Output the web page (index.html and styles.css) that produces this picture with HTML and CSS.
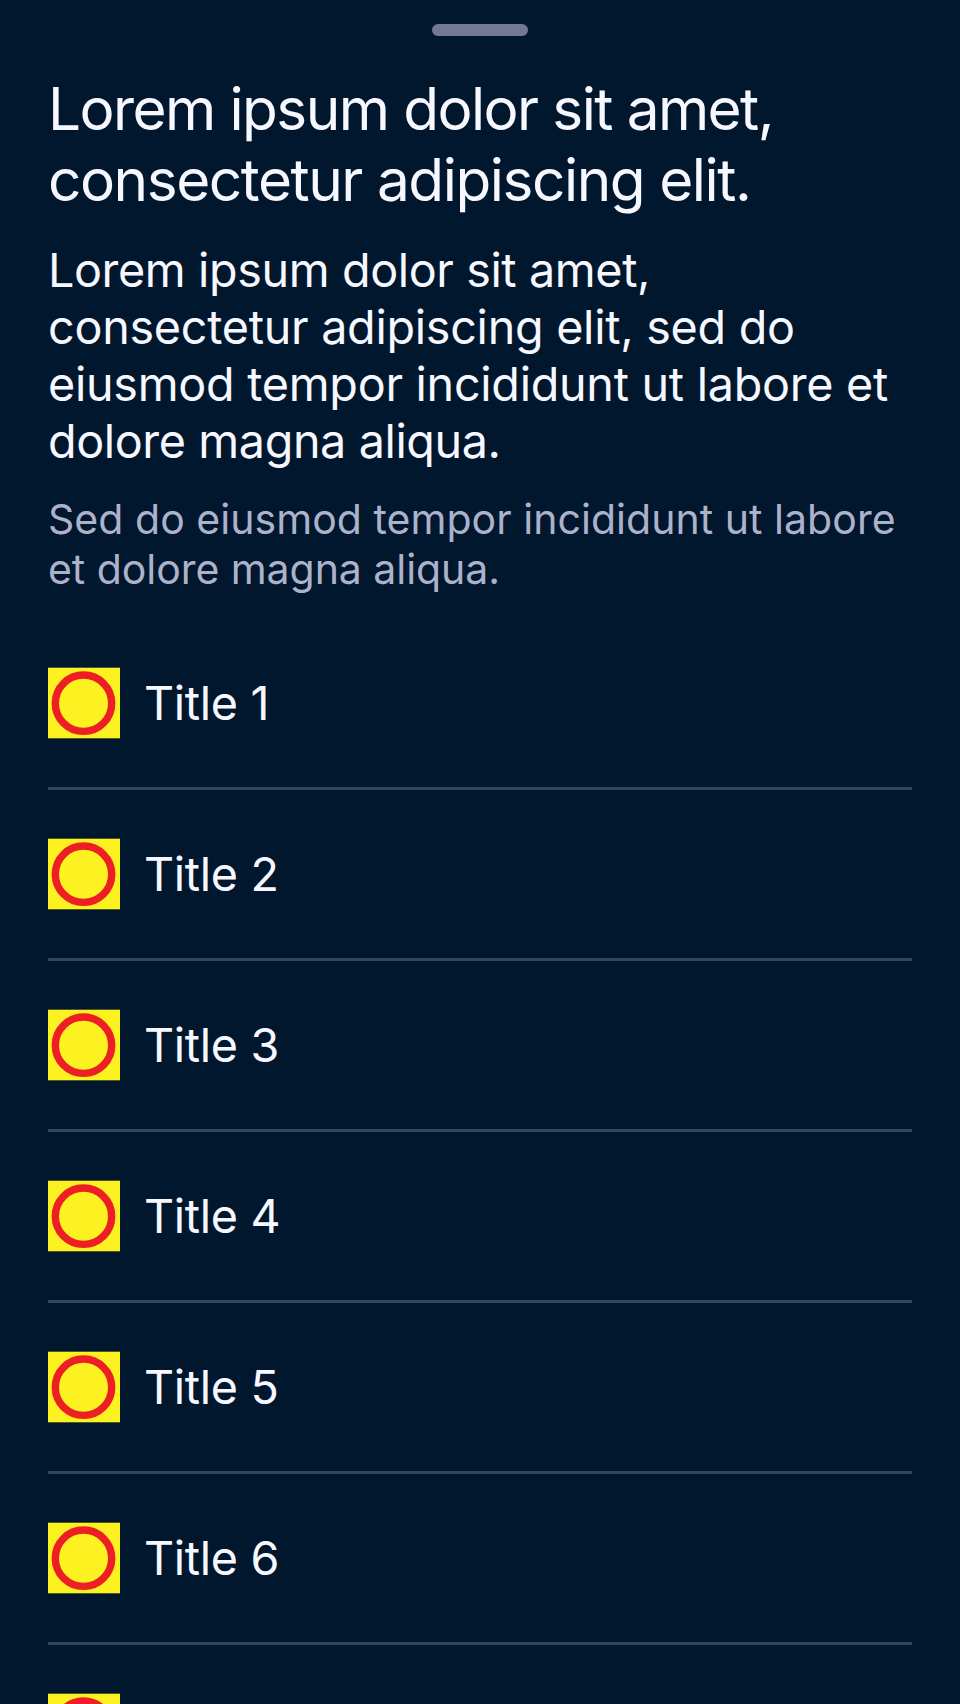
FILE: index.html
```
<!DOCTYPE html>
<html lang="en">
<head>
<meta charset="utf-8">
<title>Sheet</title>
<link rel="stylesheet" href="styles.css">
</head>
<body>
<main class="sheet">
  <div class="grabber"></div>
  <header class="intro">
    <h1 class="heading">Lorem ipsum dolor sit amet,<br><span class="heading-end">consectetur adipiscing elit.</span></h1>
    <p class="body-text"><span class="snug">Lorem ipsum dolor sit amet,</span><br>consectetur adipiscing elit, sed do<br>eiusmod tempor incididunt ut labore et<br><span class="snug">dolore magna aliqua.</span></p>
    <p class="caption">Sed do eiusmod tempor incididunt ut labore<br><span class="caption-end">et dolore magna aliqua.</span></p>
  </header>
  <ul class="list">
    <li class="row"><svg class="icon" viewBox="0 0 72 72"><rect class="tile" y="0.7" width="72" height="70.6"/><circle class="ring" cx="35.5" cy="36.2" r="28.2"/></svg><span class="title">Title 1</span></li>
    <li class="row"><svg class="icon" viewBox="0 0 72 72"><rect class="tile" y="0.7" width="72" height="70.6"/><circle class="ring" cx="35.5" cy="36.2" r="28.2"/></svg><span class="title">Title 2</span></li>
    <li class="row"><svg class="icon" viewBox="0 0 72 72"><rect class="tile" y="0.7" width="72" height="70.6"/><circle class="ring" cx="35.5" cy="36.2" r="28.2"/></svg><span class="title">Title 3</span></li>
    <li class="row"><svg class="icon" viewBox="0 0 72 72"><rect class="tile" y="0.7" width="72" height="70.6"/><circle class="ring" cx="35.5" cy="36.2" r="28.2"/></svg><span class="title">Title 4</span></li>
    <li class="row"><svg class="icon" viewBox="0 0 72 72"><rect class="tile" y="0.7" width="72" height="70.6"/><circle class="ring" cx="35.5" cy="36.2" r="28.2"/></svg><span class="title">Title 5</span></li>
    <li class="row"><svg class="icon" viewBox="0 0 72 72"><rect class="tile" y="0.7" width="72" height="70.6"/><circle class="ring" cx="35.5" cy="36.2" r="28.2"/></svg><span class="title">Title 6</span></li>
    <li class="row"><svg class="icon" viewBox="0 0 72 72"><rect class="tile" y="0.7" width="72" height="70.6"/><circle class="ring" cx="35.5" cy="36.2" r="28.2"/></svg></li>
  </ul>
</main>
</body>
</html>
```
FILE: styles.css
```
* { box-sizing: border-box; margin: 0; padding: 0; }
body {
  background: #00172d;
  color: #f7f7ff;
  font-family: Inter, "Liberation Sans", sans-serif;
}
.sheet {
  height: 1704px;
  overflow: hidden;
  padding: 24px 48px 0;
}
.grabber {
  width: 96px;
  height: 12px;
  margin: 0 auto 37px;
  border-radius: 6px;
  background: #737896;
}
.intro { white-space: nowrap; }
.heading {
  font-size: 58.5px;
  font-weight: 400;
  line-height: 71px;
  letter-spacing: -1.58px;
}
.heading-end { letter-spacing: -1.45px; }
.body-text {
  margin-top: 27px;
  font-size: 46.7px;
  line-height: 57px;
  letter-spacing: -0.27px;
}
.snug { letter-spacing: -0.39px; }
.caption {
  margin-top: 24px;
  color: #adb2cb;
  font-size: 41px;
  line-height: 50px;
  letter-spacing: 0.04px;
}
.caption-end { letter-spacing: -0.05px; }
.list { margin-top: 25px; list-style: none; }
.row {
  display: flex;
  align-items: center;
  gap: 24px;
  height: 171px;
  border-bottom: 3px solid #33455a;
}
.icon { flex: none; width: 72px; height: 72px; }
.tile { fill: #fcf222; }
.ring { fill: none; stroke: #ed1f24; stroke-width: 7.4; }
.title { font-size: 46.7px; line-height: 57px; letter-spacing: -0.3px; }
```
